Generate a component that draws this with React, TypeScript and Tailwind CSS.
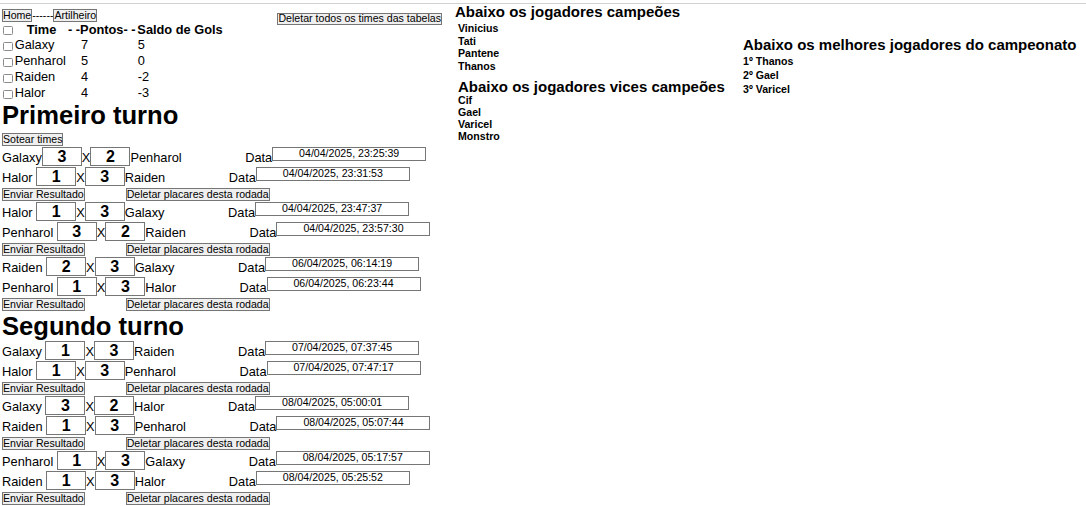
import React from "react";

type Match = { a: string; sa: number; sb: number; b: string; date: string; tight?: boolean };

const primeiro: Match[][] = [
  [
    { a: "Galaxy", sa: 3, sb: 2, b: "Penharol", date: "04/04/2025, 23:25:39", tight: true },
    { a: "Halor", sa: 1, sb: 3, b: "Raiden", date: "04/04/2025, 23:31:53" },
  ],
  [
    { a: "Halor", sa: 1, sb: 3, b: "Galaxy", date: "04/04/2025, 23:47:37" },
    { a: "Penharol", sa: 3, sb: 2, b: "Raiden", date: "04/04/2025, 23:57:30" },
  ],
  [
    { a: "Raiden", sa: 2, sb: 3, b: "Galaxy", date: "06/04/2025, 06:14:19" },
    { a: "Penharol", sa: 1, sb: 3, b: "Halor", date: "06/04/2025, 06:23:44" },
  ],
];

const segundo: Match[][] = [
  [
    { a: "Galaxy", sa: 1, sb: 3, b: "Raiden", date: "07/04/2025, 07:37:45" },
    { a: "Halor", sa: 1, sb: 3, b: "Penharol", date: "07/04/2025, 07:47:17" },
  ],
  [
    { a: "Galaxy", sa: 3, sb: 2, b: "Halor", date: "08/04/2025, 05:00:01" },
    { a: "Raiden", sa: 1, sb: 3, b: "Penharol", date: "08/04/2025, 05:07:44" },
  ],
  [
    { a: "Penharol", sa: 1, sb: 3, b: "Galaxy", date: "08/04/2025, 05:17:57" },
    { a: "Raiden", sa: 1, sb: 3, b: "Halor", date: "08/04/2025, 05:25:52" },
  ],
];

const table = [
  { t: "Galaxy", p: "7", s: "5" },
  { t: "Penharol", p: "5", s: "0" },
  { t: "Raiden", p: "4", s: "-2" },
  { t: "Halor", p: "4", s: "-3" },
];

const btn =
  "border border-[#767676] bg-[#efefef] text-black text-[10.6px] leading-[11px] px-0 flex items-center justify-center whitespace-nowrap";

function Check() {
  return (
    <span className="ml-[1.3px] mt-[4.5px] block w-[9.4px] h-[9.4px] border border-[#8a8a8a] rounded-[1.5px] bg-white" />
  );
}

function ScoreBox({ v }: { v: number }) {
  return (
    <div className="w-[40px] h-[19px] border border-[#767676] bg-white flex items-center justify-center font-bold text-[16px] leading-[16px]">
      {v}
    </div>
  );
}

function MatchRow({ m }: { m: Match }) {
  return (
    <div className="flex items-start h-[20px] text-[12.8px] leading-[22px] whitespace-pre">
      <span>{m.a + (m.tight ? "" : " ")}</span>
      <ScoreBox v={m.sa} />
      <span>X</span>
      <ScoreBox v={m.sb} />
      <span>{m.b + " "}</span>
      <span className="ml-[60px]">Data</span>
      <div className="w-[154px] h-[13.5px] border border-[#767676] bg-white text-[10.6px] leading-[11.5px] text-center">
        {m.date}
      </div>
    </div>
  );
}

function Round({ r }: { r: Match[] }) {
  return (
    <div>
      {r.map((m, i) => (
        <MatchRow key={i} m={m} />
      ))}
      <div className="flex items-start h-[15px]">
        <button className={btn + " mt-[1px] h-[13px]"}>Enviar Resultado</button>
        <button className={btn + " mt-[1px] h-[13px] ml-[41px]"}>Deletar placares desta rodada</button>
      </div>
    </div>
  );
}

export default function App() {
  return (
    <div className="w-[1086px] h-[506px] bg-white text-black font-['Liberation_Sans',Arial,sans-serif] pt-[3px] overflow-hidden">
      <div className="h-px bg-[#d0d0d0]" />
      <div className="flex">
        {/* Left column */}
        <div className="w-[453px] pl-[2px]">
          <div className="flex items-start h-[17.5px]">
            <div className="flex items-center mt-[5px]">
              <button className={btn + " h-[12.5px]"}>Home</button>
              <span className="text-[10.6px] leading-[12px]">------</span>
              <button className={btn + " h-[12.5px]"}>Artilheiro</button>
            </div>
            <button className={btn + " ml-auto mr-[11px] mt-[8.7px] h-[12.6px]"}>
              Deletar todos os times das tabelas
            </button>
          </div>

          <div className="text-[12.8px] leading-[16px]">
            <div className="flex items-start h-[15.7px] font-bold whitespace-pre">
              <div className="w-[12.7px]">
                <Check />
              </div>
              <span className="ml-[12px]">Time</span>
              <span className="ml-[11.7px]">- -Pontos- -</span>
              <span className="ml-[1.8px]">Saldo de Gols</span>
            </div>
            {table.map((r) => (
              <div key={r.t} className="flex items-start h-[16px]">
                <div className="w-[12.7px]">
                  <Check />
                </div>
                <span className="w-[66.3px]">{r.t}</span>
                <span className="w-[56.7px]">{r.p}</span>
                <span>{r.s}</span>
              </div>
            ))}
          </div>

          <h1 className="text-[25.6px] leading-[29px] font-bold">Primeiro turno</h1>
          <div className="mt-[2.5px] h-[14.6px]">
            <button className={btn + " h-[13.4px]"}>Sotear times</button>
          </div>
          {primeiro.map((r, i) => (
            <Round key={i} r={r} />
          ))}
          <h1 className="text-[25.6px] leading-[29px] font-bold">Segundo turno</h1>
          {segundo.map((r, i) => (
            <Round key={i} r={r} />
          ))}
        </div>

        {/* Middle column */}
        <div className="w-[290px]">
          <h3 className="ml-[2px] text-[15px] leading-[15px] font-bold">Abaixo os jogadores campeões</h3>
          <div className="ml-[5px]">
            <div className="mt-[3px] text-[10.6px] leading-[12.7px] font-bold">
              <div>Vinicius</div>
              <div>Tati</div>
              <div>Pantene</div>
              <div>Thanos</div>
            </div>
            <h3 className="mt-[6px] text-[15px] leading-[15px] font-bold">Abaixo os jogadores vices campeões</h3>
            <div className="text-[10.6px] leading-[12.2px] font-bold">
              <div>Cif</div>
              <div>Gael</div>
              <div>Varicel</div>
              <div>Monstro</div>
            </div>
          </div>
        </div>

        {/* Right column */}
        <div className="flex-1 mt-[33.2px]">
          <h3 className="text-[15px] leading-[15px] font-bold">Abaixo os melhores jogadores do campeonato</h3>
          <div className="mt-[1.6px] text-[10.6px] leading-[14.2px] font-bold">
            <div>1º Thanos</div>
            <div>2º Gael</div>
            <div>3º Varicel</div>
          </div>
        </div>
      </div>
    </div>
  );
}
